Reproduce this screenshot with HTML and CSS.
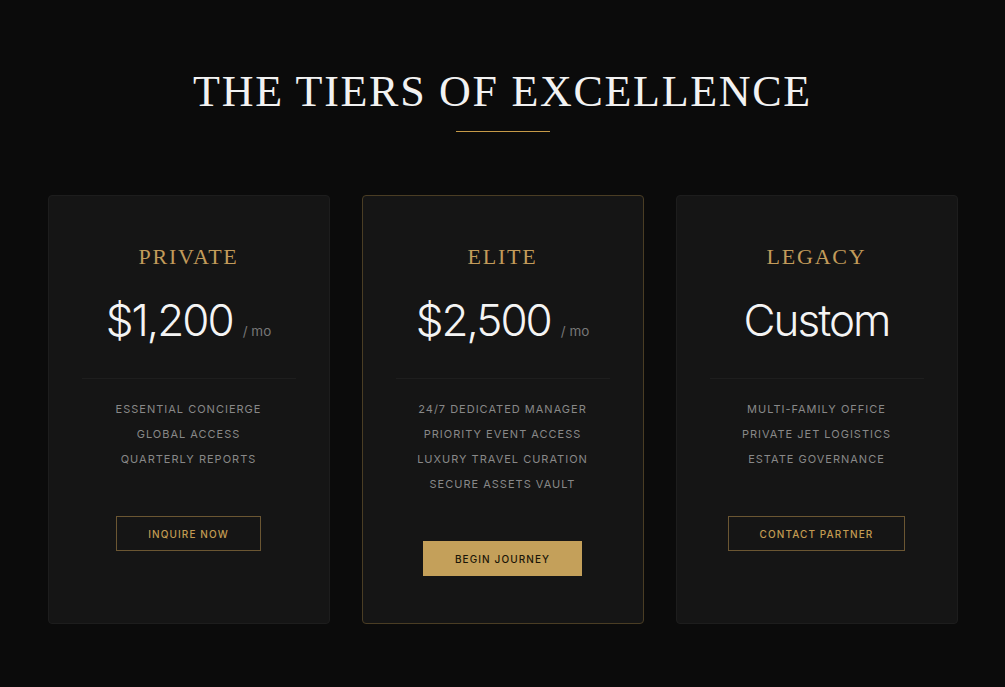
FILE: index.html
```html
<!DOCTYPE html>
<html lang="en">
<head>
<meta charset="utf-8">
<title>The Tiers of Excellence</title>
<link rel="stylesheet" href="styles.css">
</head>
<body>
<section class="tiers">
  <h1 class="title">THE TIERS OF EXCELLENCE</h1>
  <div class="rule"></div>
  <div class="cards">
    <article class="card">
      <h2 class="tier">PRIVATE</h2>
      <div class="price"><span class="amount">$1,200</span><span class="per">/ mo</span></div>
      <div class="divider"></div>
      <ul class="features">
        <li>ESSENTIAL CONCIERGE</li>
        <li>GLOBAL ACCESS</li>
        <li>QUARTERLY REPORTS</li>
      </ul>
      <a class="btn btn-outline" href="#">INQUIRE NOW</a>
    </article>
    <article class="card card-featured">
      <h2 class="tier">ELITE</h2>
      <div class="price"><span class="amount">$2,500</span><span class="per">/ mo</span></div>
      <div class="divider"></div>
      <ul class="features">
        <li>24/7 DEDICATED MANAGER</li>
        <li>PRIORITY EVENT ACCESS</li>
        <li>LUXURY TRAVEL CURATION</li>
        <li>SECURE ASSETS VAULT</li>
      </ul>
      <a class="btn btn-solid" href="#">BEGIN JOURNEY</a>
    </article>
    <article class="card">
      <h2 class="tier">LEGACY</h2>
      <div class="price"><span class="amount">Custom</span></div>
      <div class="divider"></div>
      <ul class="features">
        <li>MULTI-FAMILY OFFICE</li>
        <li>PRIVATE JET LOGISTICS</li>
        <li>ESTATE GOVERNANCE</li>
      </ul>
      <a class="btn btn-outline" href="#">CONTACT PARTNER</a>
    </article>
  </div>
</section>
</body>
</html>
```

FILE: styles.css
```css
* { box-sizing: border-box; }
html, body { margin: 0; padding: 0; }
body {
  background: #0b0b0b;
  font-family: Inter, "Liberation Sans", sans-serif;
  color: #eee;
}
.tiers {
  display: flex;
  flex-direction: column;
  align-items: center;
  padding-top: 66px;
}
.title {
  margin: 0;
  font-family: "Liberation Serif", serif;
  font-weight: 400;
  font-size: 44px;
  line-height: 52px;
  letter-spacing: 1.7px;
  color: #f2f2f2;
}
.rule {
  width: 94px;
  height: 1px;
  background: #c69a48;
  margin-top: 13px;
}
.cards {
  display: grid;
  grid-template-columns: repeat(3, 282px);
  gap: 32px;
  margin-top: 63px;
}
.card {
  background: #151515;
  border: 1px solid #1d1d1d;
  border-radius: 4px;
  height: 429px;
  padding: 47px 33px 40px;
  display: flex;
  flex-direction: column;
  align-items: center;
}
.card-featured { border-color: #4a3d24; }
.tier {
  margin: 0;
  font-family: "Liberation Serif", serif;
  font-weight: 400;
  font-size: 22px;
  line-height: 28px;
  letter-spacing: 1.8px;
  color: #c29b5a;
}
.price {
  margin-top: 21px;
  height: 56px;
  display: flex;
  align-items: baseline;
  justify-content: center;
  gap: 10px;
}
.amount {
  font-size: 44px;
  line-height: 56px;
  font-weight: 300;
  letter-spacing: -2px;
  color: #f4f4f4;
}
.per {
  font-size: 13.5px;
  color: #777;
}
.divider {
  align-self: stretch;
  height: 1px;
  background: #1e1e1e;
  margin-top: 30px;
}
.features {
  list-style: none;
  margin: 18px 0 0;
  padding: 0;
  text-align: center;
}
.features li {
  font-size: 11px;
  line-height: 25px;
  letter-spacing: 1px;
  color: #888;
}
.btn {
  margin-top: 44px;
  display: inline-flex;
  align-items: center;
  justify-content: center;
  height: 35px;
  padding: 0 31px;
  font-size: 10px;
  letter-spacing: 1.1px;
  text-decoration: none;
  font-weight: 500;
}
.btn-outline {
  border: 1px solid #6b5632;
  color: #c29b52;
}
.btn-solid {
  background: #c4a05a;
  color: #1a1508;
  padding: 0 32px;
}
```
